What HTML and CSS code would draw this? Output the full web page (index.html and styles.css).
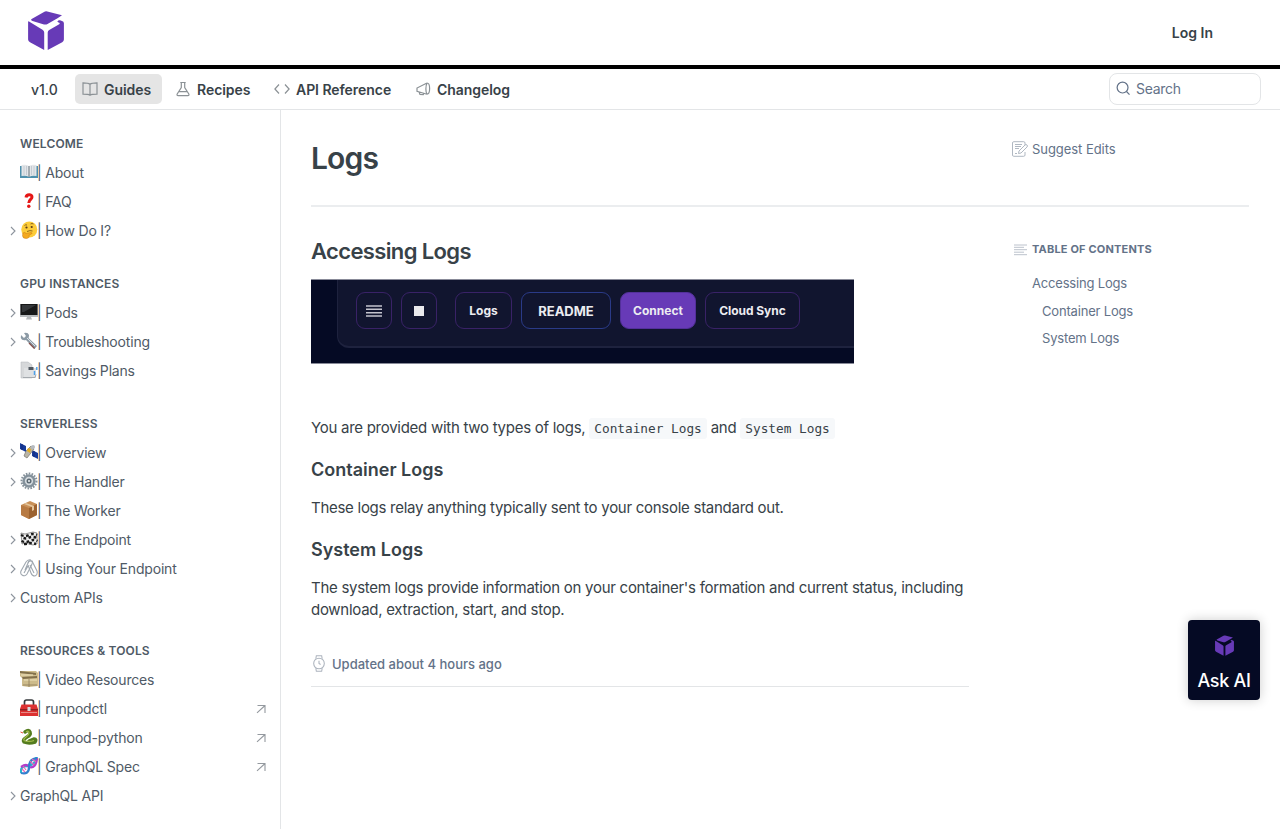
FILE: index.html
```html
<!DOCTYPE html>
<html lang="en">
<head>
<meta charset="utf-8">
<title>Logs</title>
<link rel="stylesheet" href="styles.css">
</head>
<body>
<svg class="defs" aria-hidden="true">
  <symbol id="cube" viewBox="0 0 36 39"><path d="M3.2 8.2 16 .9Q17.500 .1 19.300 .5L34 4.300 29.500 7.300 19.500 13Q18 13.800 16 13.400L4.500 9.900Q2.600 9.200 3.200 8.200ZM.1 11Q.1 10 1 10.500L14.500 18.800Q16.200 19.800 16.200 21.500V39L2 31.200Q.1 30.200 .1 28.500ZM19.700 39V21.500Q19.700 20 21.200 19.100L31.200 13.300Q32.600 11.700 30.500 11.500L29.300 10.500Q30.200 9 32 9.200L34 9.900Q35.900 10.400 35.900 12.300V28.500Q35.900 30.200 34.200 31.200Z"/></symbol>
  <symbol id="chev" viewBox="0 0 6 10"><path d="M1 1l4 4-4 4"/></symbol>
  <symbol id="ext" viewBox="0 0 10 10"><path d="M1.500 1.500h7.500v7.500M9 1.500l-8 7.300"/></symbol>
</svg>

<header class="top">
  <svg class="logo"><use href="#cube"/></svg>
  <a class="login">Log In</a>
</header>

<nav class="nav">
  <span class="version">v1.0</span>
  <a class="tab active"><svg class="tab-icon" viewBox="0 0 16 16"><path d="M8 3.200C6.500 1.900 4 1.800 1 1.800v11.400c3 0 5.500.1 7 1 1.500-.9 4-1 7-1V1.800c-3 0-5.500.1-7 1.400v11"/></svg>Guides</a>
  <a class="tab recipes"><svg class="tab-icon" viewBox="0 0 16 16"><path d="M5.300 1.500h5.400M6.300 1.500v5L2.200 13q-.7 1.700 1 1.700h9.600q1.700 0 1-1.700L9.700 6.500v-5M4 10.700h8"/></svg>Recipes</a>
  <a class="tab api"><svg class="tab-icon" viewBox="0 0 16 16"><path d="M5 3.500.9 8 5 12.500M11 3.500 15.100 8 11 12.500"/></svg>API Reference</a>
  <a class="tab change"><svg class="tab-icon" viewBox="0 0 16 16"><path d="M12 2 2 7v3.200l10 3M4 10.700l1 2.800 3.300.2.500-1.300M12 2c-1.500 3-1.500 9 0 11.200M12 2c3.500 0 3.500 11.200 0 11.200"/></svg>Changelog</a>
  <div class="search"><svg viewBox="0 0 16 16"><circle cx="7" cy="7" r="5.800"/><path d="m11.200 11.200 3.200 3.300"/></svg>Search</div>
</nav>

<div class="layout">
<aside class="side">
  <section>
    <h3>WELCOME</h3>
    <a><i></i><svg class="emo" viewBox="0 0 18 18"><path fill="#4f91ad" d="M0 3h18v12H0z"/><path fill="#e3e6e9" d="M1.500 2Q6 1 9 3q3-2 7.500-1v11Q12 12 9 14q-3-2-7.500-1z"/><path stroke="#bcc4cb" stroke-width=".8" d="M4 3v9M6.500 3v9M11.500 3v9M14 3v9"/><path stroke="#69747d" d="M9 3v11"/></svg>| About</a>
    <a><i></i><svg class="emo" viewBox="0 0 18 18"><path fill="none" stroke="#e51616" stroke-width="3" d="M6 5.500C6.500 2 12 2 12 5c0 2.500-3.200 2.500-3.200 6"/><circle cx="8.800" cy="14.300" r="1.700" fill="#e51616"/></svg>| FAQ</a>
    <a><svg class="chev"><use href="#chev"/></svg><svg class="emo" viewBox="0 0 18 18"><circle cx="9.300" cy="8.500" r="8" fill="#fccc3a"/><g fill="#593a1c"><circle cx="6.500" cy="6.500" r="1.100"/><circle cx="11.700" cy="6" r="1.100"/></g><path fill="none" stroke="#714d17" stroke-width=".8" d="M4.500 4.500q1-1 2.500-.5M10.500 3q1.500-1 3 0M7 10.500q3-1.500 5.500-.5"/><path fill="#f4a91f" stroke="#c97b12" stroke-width=".5" d="M3 12q2-1.500 3 .5l5-1q2 .2.500 1.500L9 14q1 3-2.500 3.500-4 .3-4-3z"/></svg>| How Do I?</a>
  </section>
  <section>
    <h3>GPU INSTANCES</h3>
    <a><svg class="chev"><use href="#chev"/></svg><svg class="emo" viewBox="0 0 18 18"><path fill="#b7babd" d="M0 1h18v13H0zM7 14h4l1 2.500H6z"/><path fill="#171819" d="M.5 1h17v11H.5z"/><path fill="#34373a" d="M2 2h14L4 9H2z"/></svg>| Pods</a>
    <a><svg class="chev"><use href="#chev"/></svg><svg class="emo" viewBox="0 0 18 18"><path fill="#8c9aa5" d="M1 3l3 3 2-2-2-3q4-1 5 2 0 2-.5 3l8.500 8-2.500 3L6 8Q2 9 .8 6z"/><path stroke="#d8e2e9" d="m7 6 8 8"/><path stroke="#844d47" stroke-width="1.200" d="m9 11 5.500 5.500"/></svg>| Troubleshooting</a>
    <a><i></i><svg class="emo" viewBox="0 0 18 18"><path fill="#d6d8da" stroke="#b1b4b8" stroke-width=".5" d="M1 1h7l4 3v13H1z"/><path fill="#dfe1e3" d="M4 7h12v10H4z"/><path fill="#505861" d="M8.500 6h5v3h-5z"/><path stroke="#4ea1e9" stroke-width="1.500" d="M16.800 6v3M14.500 10v4"/><path fill="none" stroke="#a4a9ae" d="M3 16.500h12l1-3"/></svg>| Savings Plans</a>
  </section>
  <section>
    <h3>SERVERLESS</h3>
    <a><svg class="chev"><use href="#chev"/></svg><svg class="emo" viewBox="0 0 18 18"><path fill="#173c9a" d="m0 0 6 3v6L0 6zM12 7l6 3v6l-6-3z"/><path fill="#b9b4a6" stroke="#77736a" stroke-width=".7" d="m6 8 5-5 3 3-7 9-3-2z"/><path fill="#e4ad21" d="m8 5 3 1-1 4-3-2z"/><circle cx="13" cy="4" r="2" fill="#b6bbc0"/><path stroke="#14297b" d="m2 1v6M14 8v6"/></svg>| Overview</a>
    <a><svg class="chev"><use href="#chev"/></svg><svg class="emo" viewBox="0 0 18 18"><circle cx="9" cy="9" r="7.500" fill="none" stroke="#85919a" stroke-width="2" stroke-dasharray="1.600 1.300"/><circle cx="9" cy="9" r="5.400" fill="#d4dade" stroke="#84919b" stroke-width="2.500"/><circle cx="9" cy="9" r="2.500" fill="#5b6973"/><circle cx="9" cy="9" r="1" fill="#edf0f2"/></svg>| The Handler</a>
    <a><i></i><svg class="emo" viewBox="0 0 18 18"><path fill="#c99159" d="m1 4 9-4 7 3v11l-8 4-8-4z"/><path fill="#9c622f" d="m9 7 8-4v11l-8 4z"/><path fill="#b77a43" d="m1 4 8 3v11l-8-4z"/><path fill="#e5c69c" d="m4 3 8 3v4l2-1V5L6 2z"/></svg>| The Worker</a>
    <a><svg class="chev"><use href="#chev"/></svg><svg class="emo" viewBox="0 0 18 18"><path fill="#eee" stroke="#555" stroke-width=".6" d="M1 3q4 2 8 0t8 0v11q-4 2-8 0t-7 0z"/><path fill="none" stroke="#191919" stroke-width="2.500" stroke-dasharray="2.700 2.500" d="M1 5q4 2 8 0t8 0M3.500 8q3 1 6-.5t7.500.5M1.500 11q4 2 8 0t8 0M4 14q3 0 5-.7t7 .7"/></svg>| The Endpoint</a>
    <a><svg class="chev"><use href="#chev"/></svg><svg class="emo" viewBox="0 0 18 18"><g fill="none" stroke="#a0a8b0" stroke-width="1.100"><path d="M5 11 8 4q1-3 3-2 2 0 1 3L7 15q-2 3-5 1-2-1-1-4L6 3q2-3 5-2M4 14l4-7"/><path d="M8 4q1-3 4-2l5 10q1 4-2 5-3 0-4-3L8 6M14 14l-4-8"/></g></svg>| Using Your Endpoint</a>
    <a><svg class="chev"><use href="#chev"/></svg>Custom APIs</a>
  </section>
  <section>
    <h3>RESOURCES &amp; TOOLS</h3>
    <a><i></i><svg class="emo" viewBox="0 0 18 18"><path fill="#cdbb8b" d="M0 1h16l2 2v13l-9 1-7-1V8L0 6z"/><path fill="#82704b" d="m0 1 16 2v2L0 3zM2 7l15-1v2L3 9z"/><path stroke="#f0e3bc" d="M1 5h12M4 10h13"/><path stroke="#8d7c58" stroke-width=".8" d="M9 9v8M3 15h14"/></svg>| Video Resources</a>
    <a><i></i><svg class="emo" viewBox="0 0 18 18"><path fill="none" stroke="#35383b" stroke-width="1.700" d="M4.500 6V3q0-2 2-2h5q2 0 2 2v3"/><path fill="#dc3131" d="M1.500 5.500h15L18 10v7H0v-7z"/><path fill="#8f2023" d="M0 10h18v1.500H0z"/><path stroke="#e78884" d="M1 13.500h16"/><path fill="#d6d9dd" d="M7.500 8h3v4h-3z"/></svg>| runpodctl<svg class="ext"><use href="#ext"/></svg></a>
    <a><i></i><svg class="emo" viewBox="0 0 18 18"><path fill="none" stroke="#547c1e" stroke-width="3.500" stroke-linecap="round" d="M5 4Q9 1 10 4q1 3-3 5-5 3-3 5 5 2 11 0 2-3-1-3l-5 2"/><path fill="none" stroke="#a4bd4c" stroke-width="1.200" d="M6 4q3-2 3 1 0 2-3 4-4 3-1 4 5 1 9-.5"/><path stroke="#e34735" d="M3 5 .5 4"/></svg>| runpod-python<svg class="ext"><use href="#ext"/></svg></a>
    <a><i></i><svg class="emo" viewBox="0 0 18 18"><g fill="none" stroke-width="2.300"><path stroke="#28b8cf" d="M1 16q-1-7 6-7t10-9"/><path stroke="#b23ccb" d="M1 10q6-4 8 0 7 2 8-9"/><path stroke="#3280cd" d="M1 16q8 2 8-6T17 1"/></g><path stroke="#ec62b5" stroke-width="1.200" d="m3 9 3 4M2 12l3 3M10 4l4 4M12 2l4 3"/></svg>| GraphQL Spec<svg class="ext"><use href="#ext"/></svg></a>
    <a><svg class="chev"><use href="#chev"/></svg>GraphQL API</a>
  </section>
</aside>

<main class="main">
  <div class="title">
    <h1>Logs</h1>
    <a class="suggest"><svg viewBox="0 0 16 16"><path d="M13 4V2q0-1.300-1.300-1.300H1.800Q.5.700.5 2v12q0 1.300 1.300 1.300h9.900Q13 15.300 13 14v-3M3 3.500h7M3 5.500h6M3 7.500h4M3 12.500h2M7 10l6-6q1-1 2 0t0 2l-6 6-2.500.5z"/></svg>Suggest Edits</a>
  </div>
  <div class="cols">
    <article>
      <h2>Accessing Logs</h2>
      <div class="shot">
        <div class="panel">
          <span class="btn sq"><svg viewBox="0 0 16 12"><path stroke="#c4c4ce" stroke-width="1.500" d="M0 1h16M0 4.300h16M0 7.700h16M0 11h16"/></svg></span>
          <span class="btn sq stop"><b></b></span>
          <span class="btn logs">Logs</span>
          <span class="btn readme">README</span>
          <span class="btn connect">Connect</span>
          <span class="btn cloud">Cloud Sync</span>
        </div>
      </div>
      <p class="intro">You are provided with two types of logs, <code>Container Logs</code> and <code>System Logs</code></p>
      <h4>Container Logs</h4>
      <p>These logs relay anything typically sent to your console standard out.</p>
      <h4>System Logs</h4>
      <p>The system logs provide information on your container's formation and current status, including download, extraction, start, and stop.</p>
      <div class="updated"><svg viewBox="0 0 14 16"><path d="M4 3.500 4.500.7h5l.5 2.800M4 12.500l.5 2.800h5l.5-2.800M7 5.500V8l1.500 1"/><circle cx="7" cy="8" r="5"/></svg>Updated about 4 hours ago</div>
    </article>
    <aside class="toc">
      <h5><svg viewBox="0 0 14 12"><path d="M.5 1h13M.5 3.300h10M.5 5.700h13M.5 8.200h10M.5 10.700h13"/></svg>TABLE OF CONTENTS</h5>
      <a>Accessing Logs</a>
      <a class="sub">Container Logs</a>
      <a class="sub">System Logs</a>
    </aside>
  </div>
</main>
</div>

<button class="ask"><svg><use href="#cube"/></svg>Ask AI</button>
</body>
</html>
```

FILE: styles.css
```css
* { box-sizing: border-box; }
html, body { height: 100%; }
body {
  margin: 0;
  height: 829px;
  overflow: hidden;
  display: flex;
  flex-direction: column;
  background: #fff;
  color: #384248;
  font-family: Inter, "Liberation Sans", sans-serif;
}
svg { display: block; flex: none; }
.defs { position: absolute; width: 0; height: 0; }
h1, h2, h3, h4, h5, p { margin: 0; }

.top {
  flex: none;
  height: 69px;
  border-bottom: 4px solid #000;
  display: flex;
  justify-content: space-between;
  align-items: flex-start;
  padding: 11px 67px 0 28px;
}
.logo { width: 36px; height: 39px; fill: #673ab7; }
.login { font-size: 14px; font-weight: 600; line-height: 20px; margin-top: 12px; }

.nav {
  flex: none;
  height: 41px;
  border-bottom: 1px solid #e3e5e7;
  display: flex;
  align-items: center;
  padding: 0 19px 0 31px;
  font-size: 14px;
  font-weight: 600;
}
.version { width: 44px; font-weight: 500; }
.tab { display: flex; align-items: center; height: 30px; border-radius: 5px; padding: 0 0 0 7px; gap: 6px; white-space: nowrap; letter-spacing: -.05px; }
.tab.active { width: 87px; background: #e5e5e5; }
.tab.recipes { width: 99px; }
.tab.recipes, .tab.api { padding-left: 13px; }
.tab.api { width: 147px; }
.tab-icon { width: 16px; height: 16px; fill: none; stroke: #8b9195; stroke-width: 1.200; }
.search {
  margin-left: auto;
  width: 152px;
  height: 32px;
  border: 1px solid #e3e5e7;
  border-radius: 8px;
  display: flex;
  align-items: center;
  padding: 0 0 1px 6px;
  gap: 5px;
  color: #637288;
  font-weight: 400;
  letter-spacing: -.3px;
}
.search svg { width: 15px; height: 15px; fill: none; stroke: #637288; stroke-width: 1.300; }

.layout { display: flex; flex: 1; min-height: 0; }
.side {
  width: 281px;
  flex: none;
  border-right: 1px solid #e3e5e7;
  padding: 19px 14px 0 10px;
  display: flex;
  flex-direction: column;
  gap: 24px;
  color: #4f5a66;
}
.side h3 { font-size: 12px; font-weight: 600; line-height: 29px; height: 29px; padding-left: 10px; letter-spacing: .15px; }
.side a { display: flex; align-items: center; height: 29px; font-size: 14px; letter-spacing: -.18px; white-space: pre; }
.side i { width: 10px; }
.chev { width: 6px; height: 10px; margin-right: 4px; fill: none; stroke: #8d949d; stroke-width: 1.100; }
.emo { width: 18px; height: 18px; fill: none; margin: 0 -1px 2px 0; }
.ext { width: 10px; height: 10px; margin-left: auto; fill: none; stroke: #94999f; stroke-width: 1.100; }

.main { flex: 1; padding: 0 31px 0 30px; }
.title {
  display: flex;
  height: 97px;
  border-bottom: 2px solid #ebedef;
  padding-top: 28px;
}
.title h1 { width: 701px; font-size: 30px; font-weight: 600; line-height: 41px; letter-spacing: -.85px; }
.suggest, .toc { color: #637288; font-size: 13px; }
.suggest { display: flex; gap: 4px; height: 22px; align-items: center; letter-spacing: -.05px; }
.suggest svg { width: 16px; height: 16px; fill: none; stroke: #b0b8c2; }
.cols { display: flex; }
article { width: 658px; flex: none; padding-top: 28px; font-size: 15px; line-height: 22px; }
article p { letter-spacing: -.275px; }
h2 { font-size: 22px; font-weight: 600; line-height: 32px; letter-spacing: -.63px; }
.shot {
  width: 543px;
  height: 85px;
  margin-top: 12px;
  background: #050a24;
  border-top: 1px solid #888a98;
  border-bottom: 1px solid #888a98;
  padding-left: 26px;
}
.panel {
  height: 68px;
  border: solid #1e223e;
  border-width: 0 0 2px 1px;
  border-bottom-left-radius: 12px;
  background: #11152f;
  display: flex;
  padding: 12px 0 0 18px;
}
.btn {
  height: 37px;
  border: 1px solid #392267;
  border-radius: 9px;
  display: flex;
  align-items: center;
  justify-content: center;
  color: #ececf1;
  font-size: 12px;
  font-weight: 700;
}
.sq { width: 36px; margin-right: 9px; }
.sq svg { width: 16px; height: 12px; }
.sq b { width: 10px; height: 10px; background: #e9e9ed; }
.stop { margin-right: 18px; }
.logs { width: 57px; margin-right: 9px; }
.readme { width: 90px; margin-right: 9px; border-color: #2a3a87; font-size: 13px; }
.connect { width: 76px; margin-right: 9px; background: #673ab7; border-color: #53309a; }
.cloud { width: 95px; letter-spacing: -.05px; }
article .intro { margin: 53px 0 -1px; }
code {
  font-family: "DejaVu Sans Mono", monospace;
  font-size: 12.750px;
  letter-spacing: 0;
  background: #f6f8fa;
  border-radius: 3px;
  padding: 3px 5px;
}
h4 { font-size: 18px; font-weight: 600; line-height: 26px; margin: 18px 0 14px; }
.updated {
  display: flex;
  align-items: center;
  gap: 5px;
  height: 35px;
  margin-top: 31px;
  padding: 0 0 11px 0;
  border-bottom: 1px solid #e3e5e7;
  color: #637288;
  font-size: 13px;
  font-weight: 500;
}
.updated svg { width: 16px; height: 17px; fill: none; stroke: #adb4be; }
.toc { margin-left: 43px; padding-top: 30px; display: flex; flex-direction: column; }
.toc h5 { display: flex; align-items: center; gap: 4px; font-size: 11px; font-weight: 700; line-height: 25px; margin: 0 0 8px 1px; letter-spacing: .18px; }
.toc h5 svg { width: 15px; height: 12px; fill: none; stroke: #bcc2cc; }
.toc a { line-height: 27.500px; padding-left: 20px; letter-spacing: -.18px; }
.toc .sub { padding-left: 30px; }

.ask {
  position: absolute;
  right: 20px;
  top: 620px;
  width: 72px;
  height: 80px;
  border: 0;
  border-radius: 4px;
  background: #050a24;
  color: #fff;
  box-shadow: 0 0 12px rgba(0, 0, 0, .2);
  display: flex;
  flex-direction: column;
  align-items: center;
  padding: 15px 0 0;
  gap: 14px;
  font: 500 18px/22px Inter, sans-serif;
  letter-spacing: -.3px;
}
.ask svg { width: 19px; height: 21px; fill: #673ab7; }
```
